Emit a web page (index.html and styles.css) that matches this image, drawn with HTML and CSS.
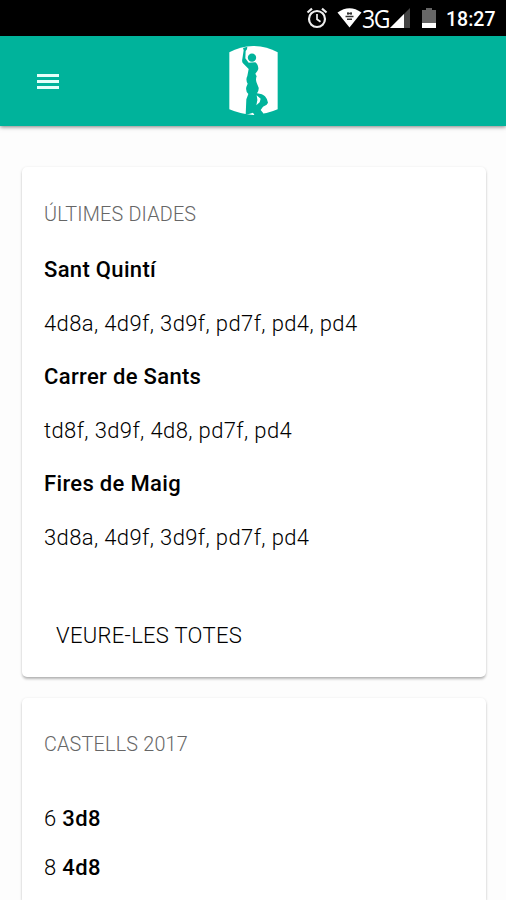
FILE: index.html
```html
<!DOCTYPE html>
<html lang="ca">
<head>
<meta charset="utf-8">
<title>Diades</title>
<link rel="stylesheet" href="styles.css">
</head>
<body>
<div class="status">
  <svg class="alarm" viewBox="0 0 22 22" width="22" height="22" fill="none" stroke="#eee" aria-hidden="true">
    <circle cx="11" cy="12" r="8" stroke-width="2.2"/>
    <path d="M11 7v5.2l3.5 2.6" stroke-width="1.7"/>
    <path d="M1.500 5.500 6 1.700M20.500 5.500 16 1.700" stroke-width="2.200"/>
  </svg>
  <svg class="wifi" viewBox="0 0 25 20" width="25" height="20" aria-hidden="true">
    <path d="M0.500 4.500Q12.500 -4 24.500 4.500L12.500 19.500Z" fill="#fff"/>
    <path d="M10 5.500h5M8.500 8.500h8M10 11.300h5" stroke="#333" stroke-width="1.400"/>
    <path d="M11 4v3M14 4v3" stroke="#333"/>
  </svg>
  <span class="network">3G</span>
  <svg class="signal" viewBox="0 0 21 20" width="21" height="20" aria-hidden="true">
    <path d="M0 20 20 0V20Z" fill="#444"/><path d="M0 20 14 6V20Z" fill="#fff"/>
  </svg>
  <svg class="battery" viewBox="0 0 14 20" width="14" height="20" aria-hidden="true">
    <path d="M0 2h4V0h6v2h4v18H0Z" fill="#666"/><path d="M0 15h14v5H0Z" fill="#fff"/>
  </svg>
  <span class="clock">18:27</span>
</div>
<header class="toolbar">
  <div class="menu"><i></i><i></i><i></i></div>
  <svg class="logo" viewBox="0 0 240 270" width="80" height="90" aria-hidden="true">
    <path d="M43 49Q75 31 115 30Q156 31 188 49V220Q156 234 115 237Q75 234 43 220Z" fill="#fff"/>
    <g fill="#00b39b">
      <circle cx="111" cy="65" r="12.500"/>
      <path d="M84 36L97 32L96 40L92 45L91 67L101 80L121 79Q130 86 130 99Q128 106 121 113L125 121Q121 130 125 140L131 155Q132 164 126 172Q143 174 150 181Q158 190 159 200L155 206L144 212L137 222L145 232L143 236L120 240L114 230L92 237L94 190L100 174Q91 166 94 153L98 143Q91 132 97 120L101 99L84 82Q80 77 82 69L86 43Z"/>
    </g>
    <path d="M125 178L137 188L134 199L124 208Q130 193 125 178Z" fill="#fff"/>
  </svg>
</header>
<main>
  <section class="card results">
    <h2>ÚLTIMES DIADES</h2>
    <h3>Sant Quintí</h3>
    <p>4d8a, 4d9f, 3d9f, pd7f, pd4, pd4</p>
    <h3>Carrer de Sants</h3>
    <p>td8f, 3d9f, 4d8, pd7f, pd4</p>
    <h3>Fires de Maig</h3>
    <p>3d8a, 4d9f, 3d9f, pd7f, pd4</p>
    <button type="button">VEURE-LES TOTES</button>
  </section>
  <section class="card season">
    <h2>CASTELLS 2017</h2>
    <ul>
      <li>6 <b>3d8</b></li>
      <li>8 <b>4d8</b></li>
    </ul>
  </section>
</main>
</body>
</html>
```
FILE: styles.css
```css
* { box-sizing: border-box; }
body {
  margin: 0;
  height: 900px;
  overflow: hidden;
  background: #fdfdfd;
  color: #000;
  font: 300 22px Roboto, sans-serif;
  letter-spacing: .38px;
}
.status {
  display: flex;
  align-items: center;
  height: 36px;
  padding-left: 306px;
  background: #000;
  color: #fff;
  letter-spacing: 0;
}
.wifi { margin-left: 9px; }
.network { width: 27px; font: 400 25px/36px "Open Sans", sans-serif; letter-spacing: -1.5px; transform: scaleX(.92); transform-origin: left; }
.signal { margin-left: 1px; }
.battery { margin-left: 11px; }
.clock { margin-left: 10px; padding-top: 3px; font-size: 19.5px; font-weight: 500; line-height: 33px; }
.toolbar {
  display: flex;
  align-items: flex-start;
  height: 90px;
  background: #00b39b;
  box-shadow: 0 1px 4px rgba(0, 0, 0, .5);
}
.menu { display: flex; flex-direction: column; gap: 3px; width: 22px; margin: 38px 0 0 37px; }
.menu i { height: 3px; background: #e5fffa; }
.logo { margin-left: 156px; }
main { display: flex; flex-direction: column; gap: 21px; padding: 41px 20px 0 22px; }
.card {
  padding: 0 22px;
  border-radius: 5px;
  background: #fff;
  box-shadow: 0 3px 3px -1px rgba(0, 0, 0, .2), 0 1px 3px rgba(0, 0, 0, .18);
}
.results { height: 510px; padding-top: 19px; }
.season { height: 202px; padding-top: 18px; border-radius: 5px 5px 0 0; }
h2, h3, p, ul { margin: 0; padding: 0; white-space: nowrap; }
h2 { height: 57px; color: #666; font-size: 19.8px; font-weight: 300; line-height: 58px; letter-spacing: .2px; }
h3 { font-size: 22px; font-weight: 500; line-height: 53.5px; letter-spacing: .33px; }
p { line-height: 53.5px; }
button {
  display: block;
  margin-top: 46px;
  padding: 0 12px;
  border: 0;
  background: none;
  color: #000;
  font: inherit;
  line-height: 52px;
  letter-spacing: .3px;
}
ul { padding-top: 21px; list-style: none; }
li { line-height: 49px; }
b { font-weight: 500; }
```
